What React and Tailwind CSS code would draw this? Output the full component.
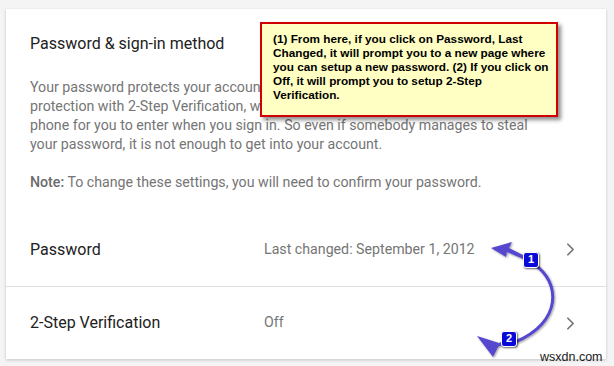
import React from 'react';
import { ChevronRight } from 'lucide-react';

const rows = [
  { label: 'Password', value: 'Last changed: September 1, 2012' },
  { label: '2-Step Verification', value: 'Off' },
];

const Badge = ({ n, className }) => (
  <div
    className={`absolute w-[16px] h-[16px] rounded-[3px] border-[1.5px] border-white bg-[#0a0ad8] text-white text-[11px] font-bold leading-[13px] text-center shadow-[1px_1px_2px_rgba(0,0,0,0.6)] ${className}`}
    style={{ fontFamily: '"Liberation Sans", Arial, sans-serif' }}
  >
    {n}
  </div>
);

const App = () => {
  return (
    <div
      className="relative w-[614px] h-[366px] overflow-hidden bg-[#f4f4f4] pt-[9px] pl-[6px]"
      style={{ fontFamily: 'Roboto, "Liberation Sans", sans-serif' }}
    >
      <div className="w-[600px] h-[350px] bg-white shadow-[0_1px_3px_rgba(0,0,0,0.2)]">
        <div className="px-[24px] pt-[23px]">
          <h2 className="text-[16px] leading-[24px] text-[#212121]">Password &amp; sign-in method</h2>
          <p className="mt-[22px] text-[14.2px] leading-[19px] text-[#757575]">
            Your password protects your account. You can add an extra layer of
            <br />
            protection with 2-Step Verification, which sends a single-use code to your
            <br />
            phone for you to enter when you sign in. So even if somebody manages to steal
            <br />
            your password, it is not enough to get into your account.
          </p>
          <p className="mt-[19px] text-[14.2px] leading-[19px] text-[#757575]">
            <span className="font-medium text-[#6b6b6b]">Note:</span> To change these settings, you will need to confirm your password.
          </p>
        </div>
        <div className="mt-[21px]">
          {rows.map((row, i) => (
            <div
              key={row.label}
              className={`flex items-center h-[73px] pl-[24px] pr-[25px] ${i > 0 ? 'border-t border-[#e0e0e0]' : ''}`}
            >
              <div className="w-[234px] text-[16px] text-[#212121]">{row.label}</div>
              <div className="text-[14.2px] text-[#757575]">{row.value}</div>
              <ChevronRight className="ml-auto text-[#757575]" size={21} strokeWidth={2} />
            </div>
          ))}
        </div>
      </div>

      {/* callout note */}
      <div
        className="absolute left-[260px] top-[22px] w-[298px] h-[95px] bg-[#ffffc4] border-2 border-[#d00000] pl-[11px] pt-[8px] text-[11.75px] leading-[14px] font-bold text-black shadow-[3px_3px_4px_rgba(0,0,0,0.45)]"
        style={{ fontFamily: '"Liberation Sans", Arial, sans-serif' }}
      >
        (1) From here, if you click on Password, Last
        <br />
        Changed, it will prompt you to a new page where
        <br />
        you can setup a new password. (2) If you click on
        <br />
        Off, it will prompt you to setup 2-Step
        <br />
        Verification.
      </div>

      {/* arrows */}
      <svg className="absolute left-0 top-0" width="614" height="366" viewBox="0 0 614 366">
        <defs>
          <filter id="sh" x="-20%" y="-20%" width="140%" height="140%">
            <feDropShadow dx="1" dy="1" stdDeviation="1" floodOpacity="0.4" />
          </filter>
        </defs>
        <g fill="#5647cf" stroke="none" filter="url(#sh)">
          <path d="M491 248 L512 242 L509 248 L525 256 L523 259 L507 252 L506 257 Z" />
          <path d="M477 336 L499 343 L503 341 L504 344 L498 347 L493 357 Z" />
        </g>
        <path
          d="M535 265 C 560 282, 563 322, 515 342"
          fill="none"
          stroke="#5647cf"
          strokeWidth="3"
          strokeLinecap="round"
          filter="url(#sh)"
        />
      </svg>
      <Badge n="1" className="left-[523px] top-[252px]" />
      <Badge n="2" className="left-[501px] top-[331px]" />

      <div
        className="absolute left-[540px] top-[350px] text-[12.5px] leading-[14px] text-[#1a1a1a]"
        style={{ fontFamily: '"Liberation Sans", Arial, sans-serif' }}
      >
        wsxdn.com
      </div>
    </div>
  );
};

export default App;
